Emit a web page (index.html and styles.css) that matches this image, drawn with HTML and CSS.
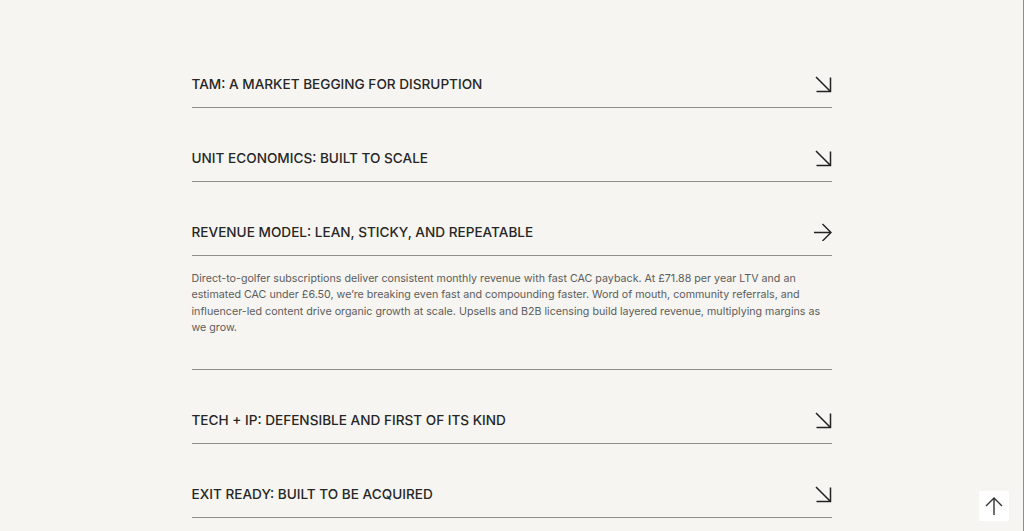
FILE: index.html
```html
<!DOCTYPE html>
<html lang="en">
<head>
<meta charset="utf-8">
<title>Investor FAQ</title>
<link rel="stylesheet" href="styles.css">
</head>
<body>
<main class="page">
  <section class="accordion">
    <div class="item">
      <div class="item-head">
        <h3 class="item-title">TAM: A MARKET BEGGING FOR DISRUPTION</h3>
        <svg class="icon" viewBox="0 0 18 18" width="18" height="18"><path d="M2 2L16.5 16.5M16.5 2.5V16.5H2.5" fill="none" stroke="#222" stroke-width="1.5"/></svg>
      </div>
    </div>
    <div class="item">
      <div class="item-head">
        <h3 class="item-title">UNIT ECONOMICS: BUILT TO SCALE</h3>
        <svg class="icon" viewBox="0 0 18 18" width="18" height="18"><path d="M2 2L16.5 16.5M16.5 2.5V16.5H2.5" fill="none" stroke="#222" stroke-width="1.5"/></svg>
      </div>
    </div>
    <div class="item open">
      <div class="item-head">
        <h3 class="item-title">REVENUE MODEL: LEAN, STICKY, AND REPEATABLE</h3>
        <svg class="icon" viewBox="0 0 18 18" width="18" height="18"><path d="M0 9.5H17M8.5 1L17 9.5L8.5 18" fill="none" stroke="#222" stroke-width="1.4"/></svg>
      </div>
      <div class="item-body">
        <p>Direct-to-golfer subscriptions deliver consistent monthly revenue with fast CAC payback. At £71.88 per year LTV and an estimated CAC under £6.50, we’re breaking even fast and compounding faster. Word of mouth, community referrals, and influencer-led content drive organic growth at scale. Upsells and B2B licensing build layered revenue, multiplying margins as we grow.</p>
      </div>
    </div>
    <div class="item">
      <div class="item-head">
        <h3 class="item-title">TECH + IP: DEFENSIBLE AND FIRST OF ITS KIND</h3>
        <svg class="icon" viewBox="0 0 18 18" width="18" height="18"><path d="M2 2L16.5 16.5M16.5 2.5V16.5H2.5" fill="none" stroke="#222" stroke-width="1.5"/></svg>
      </div>
    </div>
    <div class="item">
      <div class="item-head">
        <h3 class="item-title">EXIT READY: BUILT TO BE ACQUIRED</h3>
        <svg class="icon" viewBox="0 0 18 18" width="18" height="18"><path d="M2 2L16.5 16.5M16.5 2.5V16.5H2.5" fill="none" stroke="#222" stroke-width="1.5"/></svg>
      </div>
    </div>
  </section>
</main>
<button class="to-top" aria-label="Back to top">
  <svg viewBox="0 0 20 20" width="20" height="20"><path d="M10 19V2M2 10L10 2L18 10" fill="none" stroke="#333" stroke-width="1.4"/></svg>
</button>
</body>
</html>
```
FILE: styles.css
```css
* { box-sizing: border-box; }
html, body { margin: 0; padding: 0; }
body {
  background: #f6f5f1;
  font-family: Inter, "Liberation Sans", Arial, sans-serif;
  color: #2a2a2a;
  border-right: 1px solid #8c8c8c;
  min-height: 100vh;
}
.page {
  display: flex;
  justify-content: center;
  padding-top: 34px;
  padding-bottom: 40px;
}
.accordion {
  width: 640px;
  display: flex;
  flex-direction: column;
}
.item-head {
  display: flex;
  align-items: center;
  justify-content: space-between;
  padding: 40px 0 13px;
  border-bottom: 1px solid #8f8f8b;
}
.item-title {
  margin: 0;
  font-size: 13.6px;
  line-height: 20px;
  font-weight: 500;
  letter-spacing: 0;
  color: #262626;
}
.icon { display: block; }
.item-body {
  padding: 15px 0 33px;
  border-bottom: 1px solid #8f8f8b;
}
.item-body p {
  margin: 0;
  font-size: 10.7px;
  line-height: 16.25px;
  color: #5c5c5c;
}
.to-top {
  position: fixed;
  right: 15px;
  bottom: 10px;
  width: 30px;
  height: 30px;
  padding: 0;
  border: 0;
  background: #ffffff;
  display: flex;
  align-items: center;
  justify-content: center;
}
```
